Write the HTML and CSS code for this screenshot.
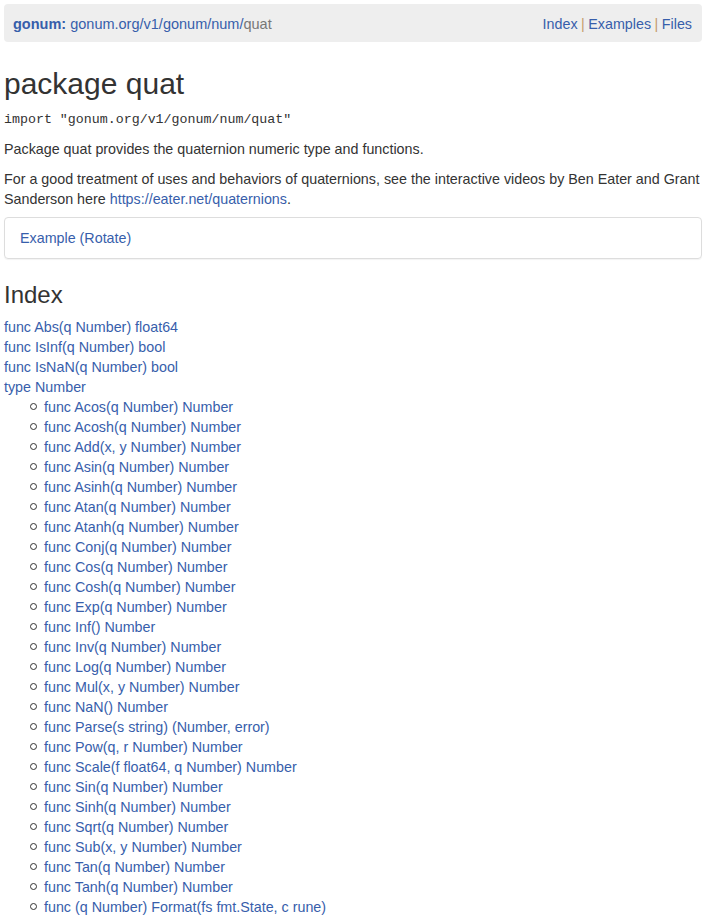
FILE: index.html
```html
<!DOCTYPE html>
<html>
<head>
<meta charset="utf-8">
<link rel="stylesheet" href="styles.css">
</head>
<body>
<div class="page">
  <nav class="navbar">
    <div class="crumbs"><a class="brand" href="#">gonum:</a> <a href="#">gonum.org/v1/gonum/num/</a><span class="muted">quat</span></div>
    <div class="navlinks"><a href="#">Index</a><span class="sep">|</span><a href="#">Examples</a><span class="sep">|</span><a href="#">Files</a></div>
  </nav>

  <h1 class="title">package quat</h1>
  <p class="import">import "gonum.org/v1/gonum/num/quat"</p>
  <p class="text">Package quat provides the quaternion numeric type and functions.</p>
  <p class="text last">For a good treatment of uses and behaviors of quaternions, see the interactive videos by Ben Eater and Grant Sanderson here <a href="#">https://eater.net/quaternions</a>.</p>

  <div class="examples"><a href="#">Example (Rotate)</a></div>

  <h2 class="index-title">Index</h2>
  <ul class="index">
    <li><a href="#">func Abs(q Number) float64</a></li>
    <li><a href="#">func IsInf(q Number) bool</a></li>
    <li><a href="#">func IsNaN(q Number) bool</a></li>
    <li><a href="#">type Number</a>
      <ul class="sub">
        <li><a href="#">func Acos(q Number) Number</a></li>
        <li><a href="#">func Acosh(q Number) Number</a></li>
        <li><a href="#">func Add(x, y Number) Number</a></li>
        <li><a href="#">func Asin(q Number) Number</a></li>
        <li><a href="#">func Asinh(q Number) Number</a></li>
        <li><a href="#">func Atan(q Number) Number</a></li>
        <li><a href="#">func Atanh(q Number) Number</a></li>
        <li><a href="#">func Conj(q Number) Number</a></li>
        <li><a href="#">func Cos(q Number) Number</a></li>
        <li><a href="#">func Cosh(q Number) Number</a></li>
        <li><a href="#">func Exp(q Number) Number</a></li>
        <li><a href="#">func Inf() Number</a></li>
        <li><a href="#">func Inv(q Number) Number</a></li>
        <li><a href="#">func Log(q Number) Number</a></li>
        <li><a href="#">func Mul(x, y Number) Number</a></li>
        <li><a href="#">func NaN() Number</a></li>
        <li><a href="#">func Parse(s string) (Number, error)</a></li>
        <li><a href="#">func Pow(q, r Number) Number</a></li>
        <li><a href="#">func Scale(f float64, q Number) Number</a></li>
        <li><a href="#">func Sin(q Number) Number</a></li>
        <li><a href="#">func Sinh(q Number) Number</a></li>
        <li><a href="#">func Sqrt(q Number) Number</a></li>
        <li><a href="#">func Sub(x, y Number) Number</a></li>
        <li><a href="#">func Tan(q Number) Number</a></li>
        <li><a href="#">func Tanh(q Number) Number</a></li>
        <li><a href="#">func (q Number) Format(fs fmt.State, c rune)</a></li>
      </ul>
    </li>
  </ul>
</div>
</body>
</html>
```

FILE: styles.css
```css
html, body {
  margin: 0;
  padding: 0;
  background: #fff;
}
body {
  font-family: "Liberation Sans", Arial, Helvetica, sans-serif;
  font-size: 14.3px;
  line-height: 20px;
  color: #333;
  overflow: hidden;
}
a {
  color: #375eab;
  text-decoration: none;
}
.page {
  padding: 4px 4px 0 4px;
}
.navbar {
  display: flex;
  justify-content: space-between;
  align-items: center;
  height: 38px;
  box-sizing: border-box;
  padding: 1px 10px 0 9px;
  background: #eee;
  border-radius: 4px;
}
.crumbs {
  font-size: 14.5px;
}
.brand {
  font-weight: bold;
}
.muted {
  color: #777;
}
.sep {
  color: #c49a6c;
  margin: 0 3.5px;
}
.title {
  font-size: 30px;
  font-weight: 500;
  line-height: 33px;
  margin: 25px 0 10px 0;
}
.import {
  font-family: "Liberation Mono", "Courier New", monospace;
  font-size: 13.3px;
  line-height: 20px;
  margin: 0 0 9px 0;
}
.text {
  margin: 0 0 10px 0;
}
.text.last {
  margin-bottom: 8px;
}
.examples {
  border: 1px solid #ddd;
  border-radius: 4px;
  box-shadow: 0 1px 1px rgba(0,0,0,0.05);
  padding: 10px 15px;
  margin-top: 0;
  margin-bottom: 23px;
}
.index-title {
  font-size: 24px;
  font-weight: 500;
  line-height: 26px;
  margin: 0 0 9px 0;
}
.index {
  list-style: none;
  padding: 0;
  margin: 0;
}
.sub {
  list-style: none;
  padding-left: 40px;
  margin: 0;
}
.sub li::before {
  content: "";
  display: inline-block;
  width: 5px;
  height: 5px;
  border: 1px solid #333;
  border-radius: 50%;
  margin-left: -14px;
  margin-right: 7px;
  vertical-align: 2px;
}
```
